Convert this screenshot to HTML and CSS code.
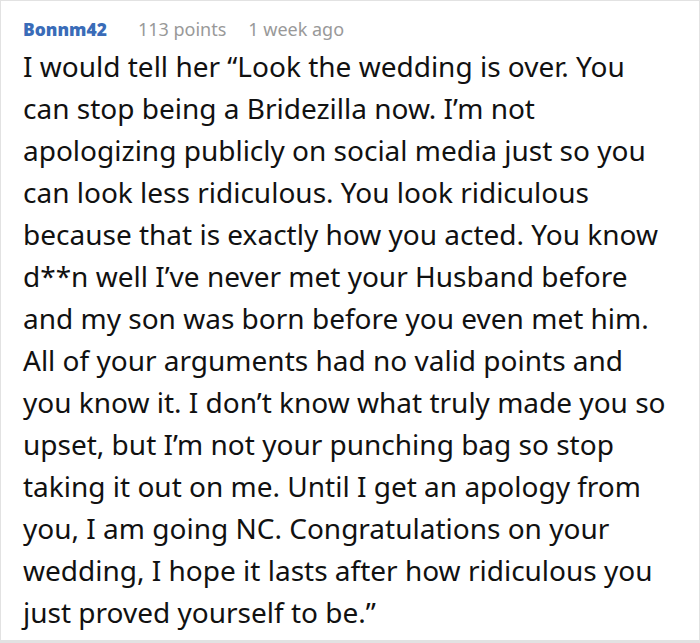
FILE: index.html
```html
<!DOCTYPE html>
<html>
<head>
<meta charset="utf-8">
<link rel="stylesheet" href="styles.css">
</head>
<body>
<div class="comment">
  <div class="meta">
    <span class="author">Bonnm42</span>
    <span class="info">113 points</span>
    <span class="info">1 week ago</span>
  </div>
  <p class="text">
    <span class="line">I would tell her “Look the wedding is over. You</span>
    <span class="line">can stop being a Bridezilla now. I’m not</span>
    <span class="line">apologizing publicly on social media just so you</span>
    <span class="line">can look less ridiculous. You look ridiculous</span>
    <span class="line">because that is exactly how you acted. You know</span>
    <span class="line">d**n well I’ve never met your Husband before</span>
    <span class="line">and my son was born before you even met him.</span>
    <span class="line">All of your arguments had no valid points and</span>
    <span class="line">you know it. I don’t know what truly made you so</span>
    <span class="line">upset, but I’m not your punching bag so stop</span>
    <span class="line">taking it out on me. Until I get an apology from</span>
    <span class="line">you, I am going NC. Congratulations on your</span>
    <span class="line">wedding, I hope it lasts after how ridiculous you</span>
    <span class="line">just proved yourself to be.”</span>
  </p>
</div>
</body>
</html>
```
FILE: styles.css
```css
html, body {
  margin: 0;
  padding: 0;
  background: #fff;
}
.comment {
  box-sizing: border-box;
  width: 700px;
  height: 643px;
  border: 1px solid #e2e2e2;
  border-bottom-width: 3px;
  padding: 16px 10px 0 22px;
  font-family: "Noto Sans", sans-serif;
}
.meta {
  display: flex;
  align-items: baseline;
  gap: 22px;
  font-size: 18px;
  line-height: 24px;
}
.author {
  font-family: "Open Sans", sans-serif;
  font-size: 17.4px;
  color: #3a6cb8;
  font-weight: 800;
  margin-right: 9px;
}
.info {
  color: #999;
}
.text {
  margin: 4px 0 0;
  font-size: 28px;
  line-height: 42px;
  color: #111;
}
.line {
  display: block;
  white-space: nowrap;
}
```
